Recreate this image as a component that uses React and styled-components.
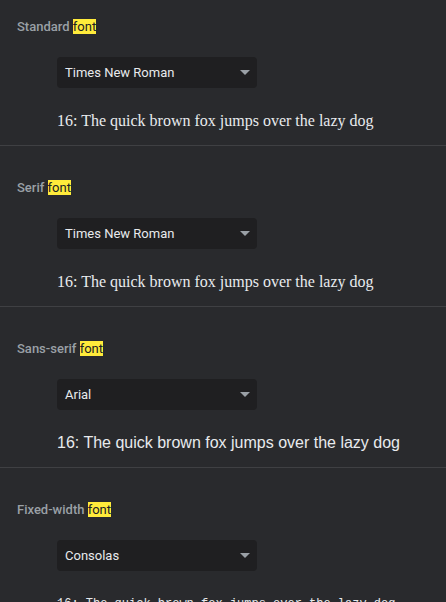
import React from "react";
import styled, { createGlobalStyle } from "styled-components";

const GlobalStyle = createGlobalStyle`
  html, body {
    margin: 0;
    padding: 0;
    background: #292a2d;
    overflow: hidden;
  }
  body {
    font-family: Roboto, "Liberation Sans", sans-serif;
  }
`;

const fonts = [
  { name: "Standard", value: "Times New Roman", family: '"Liberation Serif", serif', size: 16 },
  { name: "Serif", value: "Times New Roman", family: '"Liberation Serif", serif', size: 16 },
  { name: "Sans-serif", value: "Arial", family: '"Liberation Sans", Arial, sans-serif', size: 16 },
  { name: "Fixed-width", value: "Consolas", family: '"Liberation Mono", monospace', size: 12 },
];

export default function App() {
  return (
    <>
      <GlobalStyle />
      <Page>
        {fonts.map((f) => (
          <Section key={f.name}>
            <Label>
              {f.name} <Mark>font</Mark>
            </Label>
            <Body>
              <Select>
                <span>{f.value}</span>
                <Arrow viewBox="0 0 10 5">
                  <path d="M0 0h10L5 5z" fill="#9aa0a6" />
                </Arrow>
              </Select>
              <Sample $family={f.family} $size={f.size}>
                16: The quick brown fox jumps over the lazy dog
              </Sample>
            </Body>
          </Section>
        ))}
      </Page>
    </>
  );
}

const Page = styled.div`
  margin-top: -15px;
  width: 446px;
`;

const Section = styled.section`
  padding: 32px 0 14px;
  border-bottom: 1px solid #3f4043;
`;

const Label = styled.div`
  padding-left: 17px;
  font-size: 13px;
  font-weight: 500;
  line-height: 20px;
  color: #9aa0a6;
`;

const Mark = styled.mark`
  background: #ffeb3b;
  color: #202124;
  font-weight: 400;
`;

const Body = styled.div`
  padding: 20px 0 0 57px;
  display: flex;
  flex-direction: column;
  gap: 23px;
`;

const Select = styled.div`
  width: 200px;
  height: 31px;
  box-sizing: border-box;
  padding: 0 7px 0 8px;
  border-radius: 4px;
  background: #1f1f21;
  display: flex;
  align-items: center;
  justify-content: space-between;
  font-size: 13px;
  color: #e8eaed;
`;

const Arrow = styled.svg`
  width: 10px;
  height: 5px;
`;

const Sample = styled.div`
  font-family: ${(p) => p.$family};
  font-size: ${(p) => p.$size}px;
  line-height: 20px;
  color: #e8eaed;
  white-space: nowrap;
`;
